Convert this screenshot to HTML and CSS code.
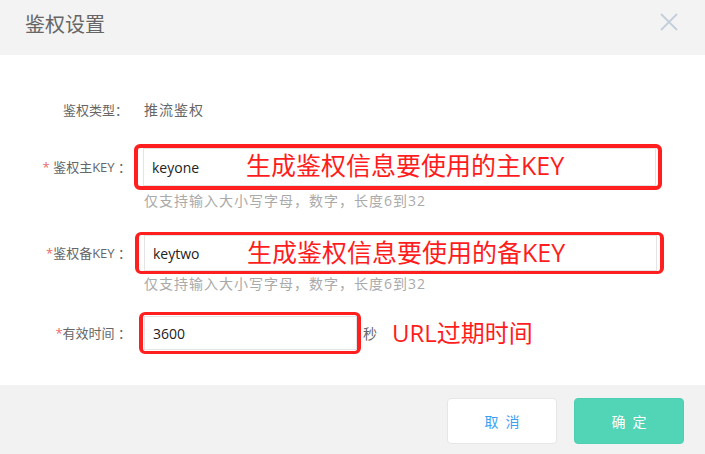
FILE: index.html
```html
<!DOCTYPE html>
<html lang="zh">
<head>
<meta charset="utf-8">
<title>鉴权设置</title>
<link rel="stylesheet" href="styles.css">
</head>
<body>
<div class="dialog">
  <header class="dialog-header">
    <h1 class="dialog-title">鉴权设置</h1>
    <button class="close-btn" aria-label="关闭">
      <svg width="18" height="18" viewBox="0 0 18 18"><path d="M1 1 L17 17 M17 1 L1 17" stroke="#c4cfdb" stroke-width="2" fill="none"/></svg>
    </button>
  </header>
  <main class="dialog-body">
    <div class="form-row row-type">
      <div class="label">鉴权类型：</div>
      <div class="field"><span class="static-value">推流鉴权</span></div>
    </div>

    <div class="form-row row-key1">
      <div class="label"><span class="req">* </span>鉴权主KEY ：</div>
      <div class="field">
        <div class="mark mark-key1">
          <div class="input input-wide">keyone<span class="note note-in">生成鉴权信息要使用的主KEY</span></div>
        </div>
      </div>
    </div>
    <div class="hint">仅支持输入大小写字母，数字，长度6到32</div>

    <div class="form-row row-key2">
      <div class="label"><span class="req">*</span>鉴权备KEY ：</div>
      <div class="field">
        <div class="mark mark-key2">
          <div class="input input-wide">keytwo<span class="note note-in">生成鉴权信息要使用的备KEY</span></div>
        </div>
      </div>
    </div>
    <div class="hint">仅支持输入大小写字母，数字，长度6到32</div>

    <div class="form-row row-time">
      <div class="label"><span class="req">*</span>有效时间 ：</div>
      <div class="field">
        <div class="mark mark-time">
          <div class="input input-short">3600</div>
        </div>
        <span class="unit">秒</span>
        <span class="note note-out">URL过期时间</span>
      </div>
    </div>
  </main>
  <footer class="dialog-footer">
    <button class="btn btn-cancel">取消</button>
    <button class="btn btn-ok">确定</button>
  </footer>
</div>
</body>
</html>
```

FILE: styles.css
```css
* { box-sizing: border-box; }
html, body { margin: 0; padding: 0; background: #fff; }
body {
  font-family: "Open Sans", "Noto Sans CJK SC", sans-serif;
  font-size: 14px;
  color: #666;
}
.dialog {
  width: 705px;
  height: 454px;
  display: flex;
  flex-direction: column;
}
.dialog-header {
  height: 55px;
  flex: none;
  background: #f3f3f3;
  display: flex;
  align-items: flex-start;
  justify-content: space-between;
  padding: 0 27px 0 25px;
}
.dialog-title {
  margin: 12px 0 0;
  font-size: 20px;
  font-weight: normal;
  color: #666;
  line-height: 26px;
}
.close-btn {
  border: 0;
  background: none;
  padding: 0;
  width: 18px;
  height: 18px;
  display: flex;
  margin-top: 13px;
}
.dialog-body {
  flex: 1;
  padding-top: 45px;
}
.form-row {
  display: flex;
  align-items: center;
}
.label {
  width: 134px;
  flex: none;
  text-align: right;
  padding-right: 3px;
  line-height: 20px;
  font-size: 13px;
  color: #666;
  white-space: nowrap;
}
.row-type .label { padding-right: 6px; }
.req { color: #e96b6b; }
.field {
  display: flex;
  align-items: center;
}
.static-value { line-height: 20px; padding-left: 10px; color: #666; letter-spacing: 1px; }
.row-key1 { margin-top: 24px; }
.row-key2 { margin-top: 21px; }
.row-time { margin-top: 18px; }

.mark {
  border: 4px solid #ff1f1f;
  border-radius: 6px;
  background: #fff;
}
.mark-key1 { padding: 0 2px 0 5px; }
.mark-key2 { padding: 0 3px 0 5px; border-width: 3px 4px 3px 4px; margin-left: 1px; }
.mark-time { padding: 1px 0 1px 1px; border-width: 3px 4px 3px 4px; margin-left: 5px; }

.input {
  position: relative;
  height: 38px;
  border: 1px solid #e4e4e4;
  padding-left: 8px;
  display: flex;
  align-items: center;
  color: #222;
  font-size: 14px;
}
.mark-key2 .input { height: 36px; }
.mark-time .input { height: 34px; }
.input-wide { width: 513px; }
.input-short { width: 213px; }

.note {
  color: #ff1c1c;
  white-space: nowrap;
}
.note-in {
  position: absolute;
  left: 102px;
  top: 0;
  font-size: 25px;
  line-height: 32px;
}
.note-out {
  margin-left: 15px;
  font-size: 24px;
  line-height: 30px;
}
.unit { margin-left: 2px; color: #666; }

.hint {
  margin-left: 144px;
  color: #aaa;
  line-height: 20px;
  font-size: 14px;
  letter-spacing: 1px;
}
.row-key1 + .hint { margin-top: 1px; }

.dialog-footer {
  height: 69px;
  flex: none;
  background: #f2f2f2;
  display: flex;
  justify-content: flex-end;
  align-items: flex-start;
  padding: 13px 21px 0 0;
  gap: 17px;
}
.btn {
  width: 110px;
  height: 46px;
  border-radius: 4px;
  font-family: inherit;
  font-size: 14px;
  letter-spacing: 7px;
  text-indent: 7px;
  cursor: pointer;
}
.btn-cancel {
  background: #fff;
  border: 1px solid #e6e6e6;
  color: #3aa0f3;
}
.btn-ok {
  background: #52d4b6;
  border: 1px solid #4fcfb1;
  color: #fff;
}
```
